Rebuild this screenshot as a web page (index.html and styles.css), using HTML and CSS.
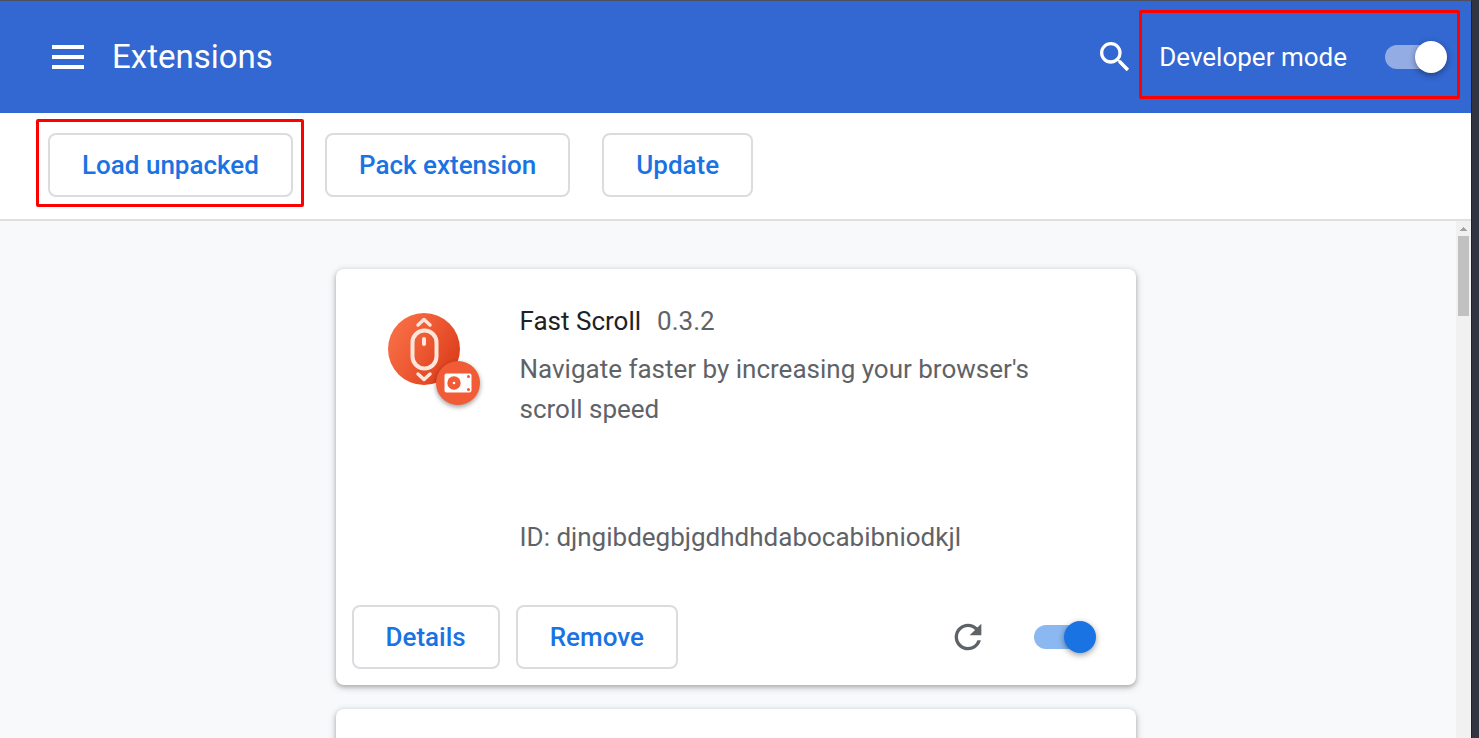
FILE: index.html
```html
<!DOCTYPE html>
<html lang="en">
<head>
<meta charset="utf-8">
<title>Extensions</title>
<link rel="stylesheet" href="styles.css">
</head>
<body>
<div class="window">
  <header class="header">
    <button class="icon-button menu-button" type="button" aria-label="Main menu">
      <svg width="32" height="24" viewBox="0 0 32 24" fill="currentColor"><path d="M0 0h32v4H0zM0 10h32v4H0zM0 20h32v4H0z"/></svg>
    </button>
    <h1 class="title">Extensions</h1>
    <button class="icon-button search-button" type="button" aria-label="Search extensions">
      <svg width="40" height="40" viewBox="0 0 24 24" fill="currentColor"><path d="M15.5 14h-.79l-.28-.27A6.471 6.471 0 0 0 16 9.500 6.500 6.500 0 1 0 9.500 16c1.610 0 3.090-.590 4.230-1.570l.27.28v.79l5 4.990L20.490 19l-4.990-5zm-6 0C7.010 14 5 11.990 5 9.500S7.010 5 9.500 5 14 7.010 14 9.500 11.990 14 9.500 14z"/></svg>
    </button>
    <div class="dev-mode marked marked-dev">
      <label for="dev-mode">Developer mode</label>
      <input class="toggle toggle-light" id="dev-mode" type="checkbox" checked>
    </div>
  </header>
  <div class="toolbar">
    <div class="marked marked-load"><button class="button" type="button">Load unpacked</button></div>
    <button class="button" type="button">Pack extension</button>
    <button class="button" type="button">Update</button>
  </div>
  <main class="content">
    <div class="cards">
      <article class="card">
        <div class="card-main">
          <div class="card-icon">
            <svg width="72" height="72" viewBox="0 0 72 72" fill="none" stroke="#ffe6dc" stroke-linecap="round" stroke-linejoin="round">
              <defs><linearGradient id="disc" x1="0" y1="0.200" x2="1" y2="0.800"><stop offset="0" stop-color="#f87048"/><stop offset="0.450" stop-color="#ee5a33"/><stop offset="1" stop-color="#d93a18"/></linearGradient></defs>
              <circle cx="36" cy="36" r="36" fill="url(#disc)" stroke="none"/>
              <rect x="24.500" y="17.500" width="24" height="38" rx="12" stroke-width="4"/>
              <path d="M36 26v5" stroke-width="4"/>
              <path d="M30 12l6-5.500 6 5.500M30 61l6 5.500 6-5.500" stroke-width="3.500"/>
            </svg>
            <div class="badge">
              <svg width="28" height="20" viewBox="0 0 28 20">
                <rect x="0.500" y="0.500" width="27" height="19" rx="2" fill="#fff"/>
                <circle cx="10" cy="10" r="6.700" fill="#f15b35"/>
                <circle cx="10" cy="10" r="1.300" fill="#fff"/>
                <circle cx="24.500" cy="3.500" r="1.500" fill="#f15b35"/>
                <circle cx="24.500" cy="16.500" r="1.500" fill="#f15b35"/>
              </svg>
            </div>
          </div>
          <div class="card-text">
            <div class="card-heading"><h2 class="name">Fast Scroll</h2><span>0.3.2</span></div>
            <p class="description">Navigate faster by increasing your browser's scroll speed</p>
            <p class="extension-id">ID: djngibdegbjgdhdhdabocabibniodkjl</p>
          </div>
        </div>
        <div class="card-actions">
          <button class="button" type="button">Details</button>
          <button class="button" type="button">Remove</button>
          <button class="icon-button reload-button" type="button" aria-label="Reload">
            <svg width="40" height="40" viewBox="0 0 24 24" fill="currentColor"><path d="M17.650 6.350A7.958 7.958 0 0 0 12 4a8 8 0 1 0 7.730 10h-2.080A5.990 5.990 0 0 1 12 18c-3.310 0-6-2.690-6-6s2.690-6 6-6c1.660 0 3.140.69 4.220 1.780L13 11h7V4l-2.350 2.350z"/></svg>
          </button>
          <input class="toggle toggle-blue" type="checkbox" checked aria-label="Enable Fast Scroll">
        </div>
      </article>
      <article class="card"></article>
    </div>
    <div class="scrollbar">
      <svg width="15" height="15" viewBox="0 0 15 15" fill="#a3a3a3" shape-rendering="crispEdges"><path d="M4 10V9h1V8h1V7h1V6h1v1h1v1h1v1h1v1z"/></svg>
      <div class="thumb"></div>
    </div>
  </main>
</div>
</body>
</html>
```
FILE: styles.css
```css
* {
  box-sizing: border-box;
}

body {
  margin: 0;
  height: 100vh;
  overflow: hidden;
  background: #323442;
  color: #5f6368;
  font-family: Roboto, "Liberation Sans", sans-serif;
  font-size: 26px;
  line-height: 40px;
}

h1, h2, p {
  margin: 0;
  font-weight: 400;
}

.window {
  display: flex;
  flex-direction: column;
  height: 100%;
  margin-right: 7px;
  border-top: 1px solid #4b4f5e;
  border-right: 1px solid #1e2030;
  background: #fff;
}

.header {
  display: flex;
  flex: none;
  align-items: center;
  height: 112px;
  padding: 0 24px 0 52px;
  background: #3367d1;
  color: #fff;
}

.icon-button {
  display: flex;
  padding: 0;
  border: 0;
  background: none;
  color: inherit;
}

.title {
  margin-left: 28px;
  font-size: 33px;
}

.search-button {
  margin-left: auto;
}

.dev-mode {
  display: flex;
  align-items: center;
  gap: 38px;
  margin-left: 24px;
}

/* Red outline that calls attention to a control */
.marked {
  position: relative;
}

.marked::after {
  content: "";
  position: absolute;
  border: 3px solid #f00;
  border-radius: 2px;
  pointer-events: none;
}

.marked-dev::after {
  inset: -27px -13px -22px -20px;
}

.marked-load::after {
  inset: -14px -11px -10px -12px;
}

.toggle {
  position: relative;
  flex: none;
  width: 62px;
  height: 24px;
  margin: 0;
  appearance: none;
}

.toggle::before {
  content: "";
  position: absolute;
  inset: 0 6px 0 0;
  border-radius: 12px;
}

.toggle::after {
  content: "";
  position: absolute;
  top: -4px;
  right: 0;
  width: 32px;
  height: 32px;
  border-radius: 50%;
  box-shadow: 0 2px 6px rgba(0, 0, 0, 0.4);
}

.toggle-light::before {
  background: #94ace4;
}

.toggle-light::after {
  background: #fff;
}

.toggle-blue::before {
  background: #8cb8f1;
}

.toggle-blue::after {
  background: #1a73e3;
}

.toolbar {
  display: flex;
  flex: none;
  gap: 32px;
  padding: 20px 48px 22px;
  border-bottom: 2px solid #dfdfdf;
}

.button {
  display: block;
  height: 64px;
  padding: 0 32px;
  border: 2px solid #dadce0;
  border-radius: 8px;
  background: #fff;
  color: #1a73e3;
  font: 500 26px/40px Roboto, "Liberation Sans", sans-serif;
}

.content {
  position: relative;
  flex: 1;
  min-height: 0;
  overflow: hidden;
  background: #f8f9fb;
}

.cards {
  display: flex;
  flex-direction: column;
  gap: 24px;
  width: 800px;
  max-width: calc(100% - 60px);
  margin: 0 auto;
  padding-top: 48px;
}

.card {
  display: flex;
  flex-direction: column;
  min-height: 416px;
  border-radius: 8px;
  background: #fff;
  box-shadow: 0 2px 4px rgba(60, 64, 67, 0.3), 0 2px 6px 2px rgba(60, 64, 67, 0.15);
}

.card-main {
  display: flex;
  flex: 1;
  gap: 60px;
  padding: 32px 80px 0 52px;
}

.card-icon {
  position: relative;
  flex: none;
  width: 72px;
  height: 72px;
  margin-top: 12px;
}

.badge {
  position: absolute;
  right: -20px;
  bottom: -20px;
  display: flex;
  align-items: center;
  justify-content: center;
  width: 44px;
  height: 44px;
  border-radius: 50%;
  background: #f15b35;
  box-shadow: 0 2px 5px rgba(0, 0, 0, 0.4);
}

.card-heading {
  display: flex;
  gap: 16px;
}

.name {
  color: #202124;
  font-size: 26px;
}

.description {
  min-height: 80px;
  margin-top: 8px;
}

.extension-id {
  margin-top: 88px;
}

.card-actions {
  display: flex;
  align-items: center;
  gap: 16px;
  padding: 0 40px 16px 16px;
}

.reload-button {
  margin-right: 30px;
  margin-left: auto;
}

.scrollbar {
  position: absolute;
  inset: 0 0 0 auto;
  display: flex;
  flex-direction: column;
  width: 15px;
  background: #f1f1f1;
}

.thumb {
  height: 80px;
  margin: 0 2px;
  background: #c1c1c1;
}
```
